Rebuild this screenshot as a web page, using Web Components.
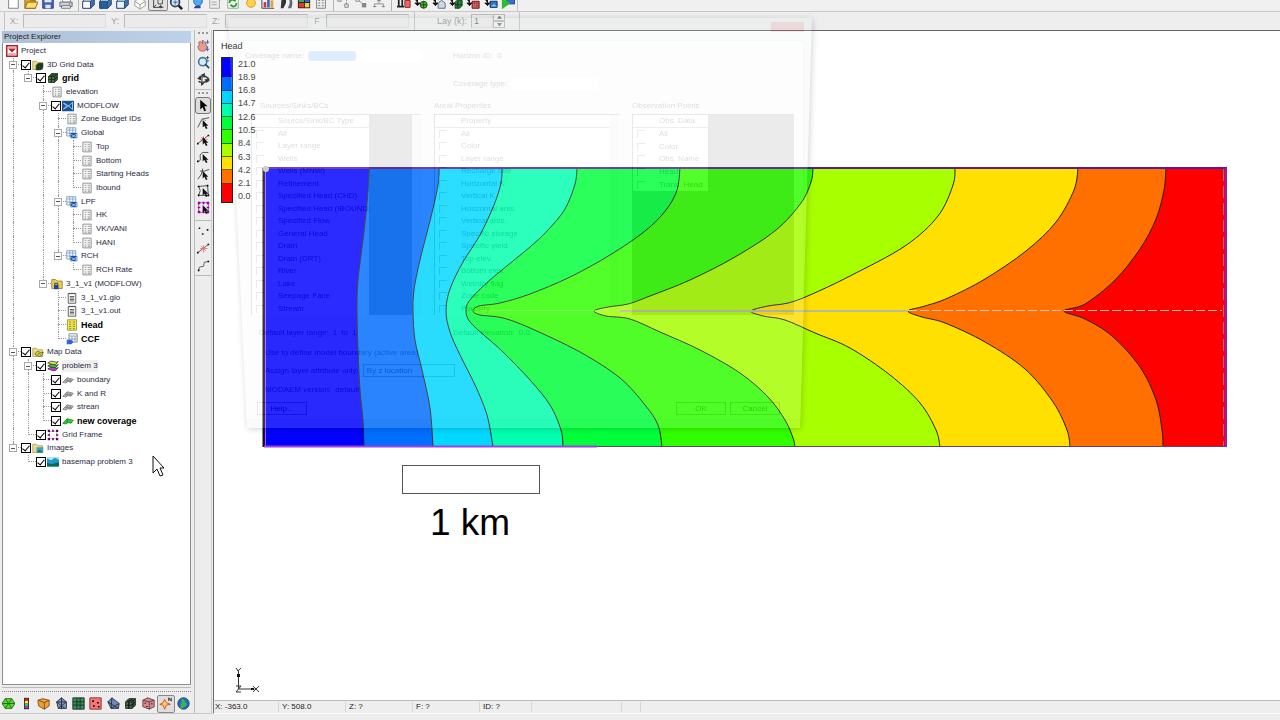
<!DOCTYPE html>
<html lang="en">
<head>
<meta charset="utf-8">
<title>Groundwater model – Head</title>
<style>
html,body{margin:0;height:100%}
body{background:#eeeded;font:8px/12px "Liberation Sans",Arial,sans-serif;color:#222;overflow:hidden}
</style>
</head>
<body>
<gw-app></gw-app>
<script>
const define = (name, css, html) => customElements.define(name, class extends HTMLElement {
  connectedCallback() {
    if (this.shadowRoot) return;
    const root = this.attachShadow({ mode: 'open' });
    root.innerHTML = `<style>*{box-sizing:border-box}${css}</style>${typeof html === 'function' ? html(this) : html}`;
  }
});

/* ---------- icons, all on a 16 x 16 grid ---------- */
const sheet = '<path d="M2.5 1.5h11v13h-11z" fill="#f4f4f4" stroke="#777"/><path d="M5 4.5h2M9 4.5h3M5 7.5h2M9 7.5h3M5 10.5h2M9 10.5h3M5 12.5h2M9 12.5h3" stroke="#888"/>';
const folder = '<path d="M1 3h5l2 2h6v9H1z" fill="#ecd98a" stroke="#a89850"/>';
const cube = (f, s) => `<path d="M2 6l4-4h8v8l-4 4H2z" fill="${f}" stroke="${s}"/><path d="M2 6h8v8M10 6l4-4M2 10h8l4-4M6 6v8l0-8 4-4M4 4h8v8" fill="none" stroke="${s}"/>`;
const cursor = '<path d="M7 5v9l2-2 2 4 2-1-2-3h3z" fill="#111"/>';
const window_ = (f) => `<path d="M2 6l4-4h9v8l-4 4H2z" fill="#bfe2f2" stroke="#456"/><path d="M2 6h9v8H2z" fill="${f}" stroke="#247"/><path d="M11 6l4-4v8l-4 4z" fill="#47a" stroke="#247"/>`;
const cross = '<path d="M1 13L14 3" stroke="#444"/><path d="M8 4v9M4 8h9M5 5l6 6" stroke="#e66"/><path d="M0 12h2v2H0zM13 2h2v2h-2z" fill="#111"/>';
const layers = '<path d="M1 12q4-4 8-2t6 0q-3 6-8 4t-6-2z" fill="#d136d1" stroke="#333"/><path d="M1 8q4-4 8-2t6 0q-3 6-8 4t-6-2z" fill="#2fc22f" stroke="#333"/><path d="M1 4q4-4 8-2t6 0q-3 6-8 4t-6-2z" fill="#dde13c" stroke="#333"/>';
const put = (g) => '<path d="M1 4h3v4M1 8h6l-3 3z" fill="#111" stroke="#111"/>' + g;
const ICONS = {
  new: '<path d="M3 1h8l3 3v10H3z" fill="#fff" stroke="#777"/>',
  open: '<path d="M1 3h5l1 2h6v9H1z" fill="#d9a93a" stroke="#85621a"/><path d="M4 7h12l-3 7H1z" fill="#ffe06d" stroke="#85621a"/>',
  save: '<path d="M2 1h12v13H2z" fill="#4862b8" stroke="#24326d"/><path d="M4 1h8v6H4zM5 10h6v4H5z" fill="#dfe6f5"/>',
  print: '<path d="M4 2h9v5H4z" fill="#fff" stroke="#888"/><path d="M1 7h14v5H1z" fill="#cfd0dc" stroke="#667"/><path d="M3 11h10v3H3z" fill="#f1f1f1" stroke="#667"/><path d="M11 9h2" stroke="#2a3"/>',
  win1: window_('#fff'), win2: window_('#24609c'), win3: window_('#e8f4fa'),
  ghost: '<path d="M2 6l6-4 6 4v5l-6 4-6-4z" fill="#fafafa" stroke="#999"/><path d="M2 6l6 4 6-4M8 10v5" fill="none" stroke="#999"/>',
  axes: '<path d="M3 2v11h11M3 13l3-3" fill="none" stroke="#333"/><path d="M8 4h5v5H8zM11 10v4M9 12h4" fill="none" stroke="#444"/>',
  zoomg: '<circle cx="7" cy="7" r="5" fill="#cfe5f6" stroke="#345" stroke-width="2"/><path d="M11 11l4 4" stroke="#222" stroke-width="3"/><path d="M5 7h5M7 5v5" stroke="#26a"/>',
  bulb: '<circle cx="8" cy="6" r="5" fill="#55a9ee" stroke="#2468b4"/><path d="M5 11h6v3H3l2-3z" fill="#2b45a8"/>',
  prop: '<path d="M2 3h11v11H2z" fill="#eee" stroke="#999"/><path d="M4 7h6M4 10h6" stroke="#999"/><path d="M10 3l4-2 1 4z" fill="#888"/>',
  refresh: '<path d="M2 1h12v13H2z" fill="#f4f4f4" stroke="#8a8"/><path d="M4 8q0-4 4-4l3 2M12 8q0 4-4 4l-3-2" fill="none" stroke="#1fa32c" stroke-width="2"/>',
  sun: '<circle cx="8" cy="8" r="5" fill="#ffd24a" stroke="#d7941a"/>',
  bars: '<path d="M1 1v13h14" fill="none" stroke="#333"/><path d="M3 7h3v6H3z" fill="#c33"/><path d="M7 3h3v10H7z" fill="#36c"/><path d="M11 5h3v8h-3z" fill="#e6a02a"/>',
  find: '<path d="M3 2h5v6l-3 6H2z" fill="#333"/><path d="M9 2q6 3 1 12h4q3-8-1-12z" fill="#666"/>',
  colors: '<path d="M1 1h14v13H1z" fill="#222"/><path d="M2 2h6v5H2z" fill="#3a6"/><path d="M9 2h5v5H9z" fill="#36d"/><path d="M2 8h6v5H2z" fill="#e33"/><path d="M9 8h5v5H9z" fill="#fc3"/>',
  calc: '<path d="M3 1h10v13H3z" fill="#eee" stroke="#777"/><path d="M5 5h2M9 5h2M5 8h2M9 8h2M5 11h2M9 11h2" stroke="#666"/>',
  flow1: '<path d="M2 2h4v4H2zM10 9h4v4h-4z" fill="#ddd" stroke="#888"/><path d="M6 4h6v5" fill="none" stroke="#888" stroke-dasharray="2 1"/>',
  flow2: '<path d="M9 8h5v5H9z" fill="#888"/><path d="M2 2h4v4H2z" fill="none" stroke="#888"/><path d="M6 6l3 2" stroke="#888"/>',
  flow3: '<path d="M6 2h4v4H6z" fill="#888"/><path d="M8 6v3M3 13V9h10v4" fill="none" stroke="#888"/><path d="M1 12h4M11 12h4" stroke="#888"/>',
  gridred: '<path d="M2 2v11M0 12h8M6 2v11" stroke="#222" stroke-width="2"/><path d="M9 5h6v8H9z" fill="#e66" stroke="#722"/>',
  tomesh: put('<circle cx="11" cy="10" r="4" fill="#4cb02f" stroke="#164a0c"/><path d="M7 10h8M11 6v8" stroke="#164a0c"/>'),
  tosolid: put('<path d="M7 8l4-3 4 3v6H7z" fill="#cdd8e6" stroke="#567"/>'),
  togrid: put('<path d="M7 7l2-2h6v6l-3 3H7z" fill="#2c7a35" stroke="#0c3a14"/><path d="M10 6v8M7 10h8" stroke="#0c3a14"/>'),
  tored: put('<path d="M7 6h8v8H7z" fill="#d65a5a" stroke="#511"/><path d="M9 8h1M12 11h1M12 8h1" stroke="#111"/>'),
  toblue: put('<path d="M7 6h8v7H7z" fill="#2a78d8" stroke="#124"/><path d="M8 12l3-3 4 3z" fill="#7cc7ff"/>'),
  run: '<path d="M6 1h10v8H6z" fill="#3a69d8" stroke="#223a80"/><path d="M1 3l10 5-10 7z" fill="#28c02c"/>',
  hand: '<path d="M2 13l-1-4 2-1-1-4 2-1 3 3-1-4h2l3 4 1 4q0 5-5 5-3 0-5-2z" fill="#e89d92" stroke="#a3544e"/><path d="M13 1v5M10 4h5M13 9v6M11 12l2 2 2-2" stroke="#2458a8" fill="none"/>',
  zoom: '<circle cx="7" cy="7" r="5" fill="#d6eaf8" stroke="#47799e" stroke-width="2"/><path d="M10 10l5 5" stroke="#2b4a6a" stroke-width="2"/><path d="M11 2h4M13 0v4M11 6h4" stroke="#245"/>',
  rotate: '<path d="M3 5q6-3 10 1t-3 5-8-1" fill="none" stroke="#444" stroke-width="2"/><path d="M9 2q-5 3-2 12" fill="none" stroke="#777" stroke-width="2"/><path d="M0 7l5-4v6zM10 0l-1 6-4-4zM15 7l-3 5-3-4zM5 16l0-5 4 2z" fill="#333"/>',
  arrow: '<path d="M4 1v12l3-3 2 5 2-1-2-5h4z" fill="#000"/>',
  vert: '<path d="M1 14L6 4l9-2" fill="none" stroke="#333"/><path d="M6 3l5 3" stroke="#888"/>' + cursor,
  arcx: cross + cursor,
  arcs: '<path d="M1 14q4 0 3-5t4-6h6" fill="none" stroke="#333"/><path d="M0 13h2v2H0z"/>' + cursor,
  arcg: '<path d="M1 15q6-6 6-13M4 5h5l6-2" fill="none" stroke="#333"/>' + cursor,
  poly: '<path d="M2 3l11-1 1 12H2l2-6z" fill="none" stroke="#333"/><path d="M1 2h2v2H1zM12 1h2v2h-2zM1 13h2v2H1zM13 13h2v2h-2z"/>' + cursor,
  frame: '<path d="M2 2h12v12H2z" fill="none" stroke="#b3b"/><path d="M1 1h3v3H1zM7 1h2v3H7zM12 1h3v3h-3zM1 7h3v2H1zM1 12h3v3H1zM12 12h3v3h-3zM12 7h3v2h-3zM7 12h2v3H7z" fill="#909"/>' + cursor,
  points: '<path d="M2 3h2v2H2zM12 5h2v2h-2zM6 10h2v2H6z" fill="#111"/>',
  cross,
  arc: '<path d="M2 14l1-4 5-1 1-5 5-1" fill="none" stroke="#444"/><path d="M1 13h2v2H1zM13 2h2v2h-2z"/>',
  project: '<path d="M1 1h14v14H1z" fill="#fff" stroke="#b3202c" stroke-width="2"/><path d="M3 5h10L8 10z" fill="#b3202c"/><path d="M3 4h10M3 12h10" stroke="#b3202c"/>',
  gfolder: folder + '<g transform="translate(4 4) scale(.75)">' + cube('#2f5c36', '#10240f') + '</g>',
  cube: cube('#47734a', '#12280f'),
  sheet,
  modflow: '<path d="M0 1h16v14H0z" fill="#195397"/><path d="M2 4l7 4 5-5v10l-5-5-7 4 4-4z" fill="none" stroke="#cfe4ff"/>',
  package: '<path d="M1 1h12v11H1z" fill="#fff" stroke="#5985b8"/><path d="M1 4h12M5 1v11M9 1v11M1 8h12" stroke="#6d96c6"/><path d="M6 8h9v7H6z" fill="#195397"/><path d="M7 10l4 2 3-3v5l-3-2-4 2" fill="none" stroke="#bfe0ff"/>',
  sol: '<path d="M1 2h5l2 2h7v10H1z" fill="#ecc94f" stroke="#8f7826"/><path d="M4 9h6v6H4z" fill="#1748a8"/><path d="M5 9V7h4v2" fill="none" stroke="#124"/>',
  text: '<path d="M3 2h10v13H3z" fill="#fff" stroke="#333"/><path d="M5 6h6M5 8h6M5 10h6M5 12h6M5 1v2M8 1v2M11 1v2" stroke="#333"/>',
  head: '<path d="M2 1h12v14H2z" fill="#f3ec4e" stroke="#8b8620"/><path d="M4 4h3M9 4h3M4 7h3M9 7h3M4 10h3M9 10h3M4 13h3M9 13h3" stroke="#6a661a"/>',
  ccf: '<path d="M4 1h11v11H4z" fill="#fff" stroke="#678"/><path d="M4 4h11M8 4v8M12 4v8M4 8h11" stroke="#789"/><path d="M1 9h6l3 3-3 3H1z" fill="#2b68cf"/>',
  mfolder: folder + '<g transform="translate(3 4) scale(.8)"><path d="M1 8q4-6 8-3t6 0q-2 9-8 7t-6-4z" fill="#e0e43a" stroke="#222"/><path d="M5 9q3-3 6 0" fill="none" stroke="#222"/></g>',
  layers,
  cov: '<path d="M1 11l6-6 4 1 4 1-3 4-4-1-3 2z" fill="#bbb" stroke="#777"/><path d="M7 5v5M11 6v4M4 9h9" stroke="#777" fill="none"/>',
  covon: '<path d="M1 11l6-6 4 1 4 1-3 4-4-1-3 2z" fill="#27d327" stroke="#137a13"/><path d="M7 5v5" stroke="#137a13"/>',
  gframe: '<path d="M3 3h10v10H3z" fill="none" stroke="#b9b" /><path d="M1 1h3v3H1zM7 1h2v3H7zM12 1h3v3h-3zM1 7h3v2H1zM1 12h3v3H1zM12 12h3v3h-3zM12 7h3v2h-3zM7 12h2v3H7z" fill="#606"/>',
  ifolder: folder + '<path d="M6 7h9v7H6z" fill="#3aa0d8"/><path d="M6 14l4-4 5 4z" fill="#1b7f3a"/>',
  image: '<path d="M0 2h16v12H0z" fill="#1f9ad0"/><path d="M0 3q6 4 8 1t8 1V2H0z" fill="#bdf0ff"/><path d="M0 14V9l6 2 10-3v6z" fill="#0b6a4c"/>',
  tin: '<path d="M4 2h8l4 6-4 6H4L0 8z" fill="#58d82f" stroke="#1b5d10"/><path d="M8 8L4 2M8 8l4-6M8 8h8M8 8l4 6M8 8l-4 6M8 8H0" stroke="#1b5d10"/>',
  bore: '<path d="M5 1h6v14H5z" fill="#222"/><path d="M6 2h4v3H6z" fill="#e22"/><path d="M6 5h4v3H6z" fill="#fe3"/><path d="M6 8h4v3H6z" fill="#2d4"/><path d="M6 11h4v3H6z" fill="#a3d"/>',
  solid: '<path d="M1 4l6-2 8 2v7l-6 4-7-4z" fill="#f0a038" stroke="#6a4410"/><path d="M2 4l7 3 6-3M9 7v8" fill="none" stroke="#6a4410"/>',
  mesh3: '<path d="M2 6l6-5 6 5v8H4z" fill="#7f98bd" stroke="#223"/><path d="M2 6h12M8 1v14M4 14l10-8M2 6l10 8" stroke="#223"/>',
  grid2: '<path d="M1 1h14v14H1z" fill="#3f8f4a" stroke="#123"/><path d="M1 6h14M1 10h14M6 1v14M10 1v14" stroke="#123"/>',
  scatter: '<path d="M1 1h14v14H1z" fill="#f37676" stroke="#822"/><path d="M4 4h2v2H4zM10 6h2v2h-2zM5 10h2v2H5zM11 11h2v2h-2z"/>',
  mesh: '<path d="M1 6l5-5 9 7-1 6H5z" fill="#6d8dbb" stroke="#223"/><path d="M1 6l13 8M6 1l-1 13M5 14l10-6" stroke="#223"/>',
  grid3: cube('#4d7355', '#111'),
  scatter3: '<path d="M1 4l6-3 8 3v8l-6 3-8-3z" fill="#d88a8f" stroke="#533"/><path d="M1 4l8 2 6-2M9 6v9" fill="none" stroke="#533"/><path d="M3 7h2v1H3zM5 11h2v1H5zM11 8h2v1h-2z"/>',
  map: '<path d="M7 3l2 4 5 2-5 1-2 5-2-5-4-1 4-2z" fill="#ffd84a" stroke="#d3372b"/><path d="M12 5V1l3 4V1" fill="none" stroke="#111"/>',
  globe: '<circle cx="8" cy="8" r="7" fill="#1f6fd0" stroke="#134"/><path d="M3 4q5-4 6 0t3 4-4 5-3-4-2-5z" fill="#3db54a"/>'
};
define('gw-icon', ':host{display:block;width:16px;height:16px;flex:none}svg{display:block;width:100%;height:100%}',
  el => `<svg viewBox="0 0 16 16" aria-hidden="true">${ICONS[el.getAttribute('name')] || ''}</svg>`);

const buttons = (names) => names.split(' ').map(n => {
  const on = n.endsWith('!'); const id = n.replace('!', '');
  return `<button type="button" aria-label="${id}" class="${on ? 'on' : ''}"><gw-icon name="${id}"></gw-icon></button>`;
}).join('');

/* ---------- top toolbar ---------- */
define('gw-toolbar', `
:host{display:flex;align-items:flex-end;height:12px;padding:0 4px;gap:3px;overflow:hidden;border-bottom:1px solid #c9c9c9;background:#f1f0f0}
div{display:flex;align-items:flex-end;height:100%}
div+div{border-left:1px solid #b5b5b5}
.a{width:71px}.b{width:107px}.c{width:142px}.d{width:55px}.e{width:127px;padding-left:3px;border-right:1px solid #c4c4c4}
button{flex:1;height:17px;padding:0;border:0;background:none;display:flex;justify-content:center;align-items:center}
.on{border:1px solid #888;border-radius:2px;background:#e2e2e2}
gw-icon{width:14px;height:14px}`,
`<div class="a">${buttons('new open save print')}</div><div class="b">${buttons('win1 win2 win3 ghost axes! zoomg')}</div>
<div class="c">${buttons('bulb prop refresh sun bars find colors calc')}</div><div class="d">${buttons('flow1 flow2 flow3')}</div>
<div class="e">${buttons('gridred tomesh tosolid togrid tored toblue run')}</div>`);

/* ---------- coordinate bar ---------- */
define('gw-coords', `
:host{display:flex;align-items:center;height:18px;padding-left:4px;background:#efeeee;color:#a2a2a2;font-size:9px}
.g,.k{display:flex;align-items:center;height:18px;border-left:1px solid #c4c4c4}
label{width:18px;text-align:center}
input{width:83px;height:14px;border:1px solid #bbb;border-right-color:#ddd;border-bottom-color:#ddd;background:#ecebeb;padding:0 4px;font:inherit;color:#777}
.k{margin-left:5px;padding-left:22px;border-right:1px solid #c4c4c4;padding-right:14px}
.k label{width:34px;text-align:left;color:#999}
.spin{display:flex}
.k input{width:22px;padding:0 2px}
.ud{width:12px;display:grid;grid-template-rows:7px 7px}
.ud button{padding:0;border:1px solid #bbb;background:#f1f1f1;display:flex;align-items:center;justify-content:center}
.ud svg{width:5px;height:3px}`,
`<div class="g">${['X:', 'Y:', 'Z:', 'F'].map((l, i) => `<label for="c${i}">${l}</label><input id="c${i}" disabled>`).join('')}</div>
<div class="k"><label for="lay">Lay (k):</label><span class="spin"><input id="lay" value="1"><span class="ud">
<button type="button" aria-label="Layer up"><svg viewBox="0 0 5 3"><path d="M0 3h5L3 0H2z" fill="#888"/></svg></button>
<button type="button" aria-label="Layer down"><svg viewBox="0 0 5 3"><path d="M0 0h5L3 3H2z" fill="#888"/></svg></button></span></span></div>`);

/* ---------- project tree: level, checkbox, icon, label, flags ---------- */
const TREE = [
  [0, 0, 'project', 'Project'], [1, 1, 'gfolder', '3D Grid Data', 'x'], [2, 1, 'cube', 'grid', 'xb'], [3, 0, 'sheet', 'elevation'],
  [3, 1, 'modflow', 'MODFLOW', 'x'], [4, 0, 'sheet', 'Zone Budget IDs'], [4, 0, 'package', 'Global', 'x'], [5, 0, 'sheet', 'Top'],
  [5, 0, 'sheet', 'Bottom'], [5, 0, 'sheet', 'Starting Heads'], [5, 0, 'sheet', 'Ibound'], [4, 0, 'package', 'LPF', 'x'],
  [5, 0, 'sheet', 'HK'], [5, 0, 'sheet', 'VK/VANI'], [5, 0, 'sheet', 'HANI'], [4, 0, 'package', 'RCH', 'x'], [5, 0, 'sheet', 'RCH Rate'],
  [3, 0, 'sol', '3_1_v1 (MODFLOW)', 'x'], [4, 0, 'text', '3_1_v1.glo'], [4, 0, 'text', '3_1_v1.out'], [4, 0, 'head', 'Head', 'b'],
  [4, 0, 'ccf', 'CCF', 'b'], [1, 1, 'mfolder', 'Map Data', 'x'], [2, 1, 'layers', 'problem 3', 'xs'], [3, 1, 'cov', 'boundary'],
  [3, 1, 'cov', 'K and R'], [3, 1, 'cov', 'strean'], [3, 1, 'covon', 'new coverage', 'b'], [2, 1, 'gframe', 'Grid Frame'],
  [1, 1, 'ifolder', 'Images', 'x'], [2, 1, 'image', 'basemap problem 3']
];
const continues = (i, level) => {
  for (let j = i + 1; j < TREE.length && TREE[j][0] >= level; j++) if (TREE[j][0] === level) return true;
  return false;
};
define('gw-tree', `
:host{display:grid;grid-auto-rows:1fr;height:425px;padding-left:3px;margin-top:1px}
.row{display:flex;align-items:center;min-height:0}
.row>i{width:15px;height:100%;flex:none;display:grid;grid-template:1fr 1fr/7px 8px}
i b{grid-area:1/2}
.v b,.t b{border-left:1px dotted #999}
.v b{grid-row:1/3}
i u{grid-area:1/2;border-bottom:1px dotted #999}
i button{grid-area:1/1/3/3;align-self:center;margin-left:3px;width:8px;height:8px;padding:0;border:1px solid #aaa;background:#fff;display:flex;align-items:center}
i button::after{content:"";flex:1;margin:0 1px;height:1px;background:#555}
input{appearance:none;width:10px;height:10px;margin:0 1px 0 0;border:1px solid #000;background:#fff;flex:none;display:flex;justify-content:center}
input:checked::before{content:"";width:3px;height:6px;border:solid #000;border-width:0 1px 1px 0;transform:rotate(40deg)}
gw-icon{width:12px;height:12px}
label,.t0{margin-left:3px;white-space:nowrap;color:#2b2b44}
.bold{font-size:9px;font-weight:700;color:#000}
.sel{background:#f0f0f0}`,
TREE.map(([lv, cb, ic, tx, fl = ''], i) => {
  let cells = '';
  for (let k = 1; k <= lv; k++) {
    const own = k === lv, more = continues(i, k);
    cells += `<i class="${more ? 'v' : own ? 't' : ''}">${own || more ? '<b></b>' : ''}${own ? '<u></u>' : ''}${own && fl.includes('x') ? `<button type="button" aria-label="Collapse ${tx}"></button>` : ''}</i>`;
  }
  const cls = `${fl.includes('b') ? 'bold' : ''} ${fl.includes('s') ? 'sel' : ''}`;
  return `<div class="row">${cells}${cb ? `<input type="checkbox" id="n${i}" checked>` : ''}<gw-icon name="${ic}"></gw-icon>${cb ? `<label for="n${i}" class="${cls}">${tx}</label>` : `<span class="t0 ${cls}">${tx}</span>`}</div>`;
}).join(''));

define('gw-explorer', `
:host{display:flex;flex-direction:column;min-height:0;padding:1px 3px 0 2px}
h2{margin:0;height:12px;font:inherit;padding-left:2px;background:linear-gradient(90deg,#aebfd6,#bdd2ea);color:#222}
.box{flex:1;min-height:0;overflow:hidden;background:#fff;border:1px solid #8e8e8e;border-width:0 1px 1px;margin-bottom:2px}
nav{display:flex;border-top:1px solid #bbb;height:26px;padding-top:2px;flex-direction:column}
.dots{border-top:1px dotted #888;height:4px;margin-top:1px}
.bar{display:flex;margin-left:-2px;margin-right:-1px;height:19px}
.bar button{flex:1;padding:0;border:1px solid transparent;background:none;display:flex;align-items:center;justify-content:center}
.bar .on{border-color:#888;border-radius:2px;background:#dedede}
gw-icon{width:13px;height:13px}`,
`<h2>Project Explorer</h2><div class="box"><gw-tree></gw-tree></div>
<nav aria-label="Modules"><div class="dots"></div><div class="bar">${buttons('tin bore solid mesh3 grid2 scatter mesh grid3 scatter3 map! globe')}</div></nav>`);

/* ---------- vertical tool palette ---------- */
define('gw-palette', `
:host{display:block;border-left:1px solid #bbb;border-right:1px solid #ccc;padding-top:2px}
div{display:grid;padding:0 0 1px;border-bottom:1px solid #bbb}
div.d::before{content:"";border-top:2px dotted #999;height:3px;margin:0 3px}
div.m{padding:2px 0 4px}
button{height:17px;padding:0;border:1px solid transparent;background:none;display:flex;align-items:center;justify-content:center}
.on{border-color:#777;border-radius:3px;background:#dcdcdc}
.m+div{padding-top:2px}
gw-icon{width:13px;height:13px}`,
`<div class="d">${buttons('hand zoom rotate')}</div><div class="d m">${buttons('arrow! vert arcx arcs arcg poly frame')}</div><div>${buttons('points cross arc')}</div>`);

/* ---------- head contours ---------- */
const BANDS = ['#0000ff', '#006eff', '#00d8ff', '#00ffae', '#00ff3a', '#30ff00', '#a8ff00', '#ffe000', '#ff7000', '#ff0000'];
const CONTOURS = [
  [369,168, 368,190, 366,213, 363,240, 358,280, 357,311, 358,350, 360,390, 363,420, 364,447],
  [439,168, 438,185, 431,217, 420,260, 414,290, 413,312, 415,340, 422,370, 430,408, 433,447],
  [502,168, 501,183, 494,205, 480,235, 463,262, 450,289, 446,311, 450,332, 460,355, 475,385, 487,415, 493,447],
  [577,168, 575,184, 565,209, 548,230, 530,247, 490,280, 470,300, 466,311, 470,322, 485,336, 503,352, 530,380, 550,405, 561,430, 563,447],
  [680,168, 677,190, 666,210, 645,231, 610,255, 570,277, 530,294, 500,303, 479,306, 473,311, 480,315, 503,318, 530,328, 580,352, 620,378, 645,405, 658,425, 662,447],
  [813,168, 811,182, 801,203, 776,230, 735,257, 690,280, 650,296, 628,304, 608,307, 594,311, 606,316, 630,319, 660,332, 700,350, 740,373, 768,397, 785,420, 793,438, 795,447],
  [955,168, 953,185, 938,216, 905,246, 850,276, 810,295, 788,303, 768,306, 751,311, 763,316, 785,320, 815,333, 850,348, 890,375, 920,403, 936,430, 940,447],
  [1078,168, 1074,190, 1056,222, 1026,251, 985,279, 948,298, 925,306, 908,311, 922,317, 945,323, 985,342, 1025,369, 1053,402, 1067,430, 1070,447],
  [1166,168, 1164,190, 1156,219, 1140,249, 1115,280, 1085,304, 1064,311, 1085,319, 1112,336, 1140,367, 1156,400, 1162,430, 1163,447]
];
const spline = (p) => {
  const at = (i) => { i = Math.max(0, Math.min(p.length / 2 - 1, i)); return [p[2 * i], p[2 * i + 1]]; };
  let d = `M${p[0]} ${p[1]}`;
  for (let i = 0; i < p.length / 2 - 1; i++) {
    const [a, b, c, e] = [at(i - 1), at(i), at(i + 1), at(i + 2)];
    d += `C${b[0] + (c[0] - a[0]) / 6} ${b[1] + (c[1] - a[1]) / 6} ${c[0] - (e[0] - b[0]) / 6} ${c[1] - (e[1] - b[1]) / 6} ${c[0]} ${c[1]}`;
  }
  return d;
};
define('gw-map', `
:host{display:block;position:relative;background:#fff;border:1px solid #666;border-width:1px 0 0 1px;min-height:0;overflow:hidden}
svg{display:block;width:100%;height:100%}
text{font-family:"Liberation Sans",Arial,sans-serif;fill:#000}
.legend{position:absolute;left:7px;top:9px;font-size:9px;color:#222}
.legend>div{display:flex;gap:5px;height:146px;margin-top:5px}
.bar{width:12px;display:flex;flex-direction:column;border:1px solid #222}
.bar i{flex:2;border-bottom:1px solid rgba(0,0,0,.55)}
.bar i:first-child,.bar i:last-child{flex:3}.bar i:last-child{border:0}
ol{margin:0;padding:0;list-style:none;display:grid;grid-auto-rows:1fr;align-items:center}`,
`<svg viewBox="214 31 1066 669" preserveAspectRatio="xMinYMin meet" role="img" aria-label="Head contours">
<path d="M264 168H1227V447H264z" fill="${BANDS[0]}"/>
${CONTOURS.map((c, i) => `<path d="${spline(c)}H1225V168z" fill="${BANDS[i + 1]}"/>`).join('')}
${CONTOURS.map(c => `<path d="${spline(c)}" fill="none" stroke="#222" stroke-width="1"/>`).join('')}
<path d="M480 310.5H620" stroke="#8f8" opacity=".5"/><path d="M620 311H908" stroke="#b9b9a8" stroke-width="2"/><path d="M908 310.5H1222" stroke="#e0c8b8" stroke-dasharray="9 3"/>
<path d="M263.5 168V447" stroke="#111" stroke-width="2"/><path d="M265.5 169V446" stroke="#b45cf0"/>
<path d="M264 168H1227" stroke="#5c1a96" stroke-width="2"/>
<path d="M264 446.5H597" stroke="#a040e0" stroke-width="2"/><path d="M597 446.5H1227" stroke="#6b3a7c"/>
<path d="M1223.5 169V446" stroke="#a06c80" stroke-dasharray="12 5"/><path d="M1226 168V447" stroke="#8a1dce" stroke-width="2"/>
<circle cx="266" cy="169" r="3" fill="#c9c2c2"/>
<rect x="402.5" y="465.5" width="137" height="28" fill="#fff" stroke="#555"/>
<text x="430" y="535" font-size="37">1 km</text>
<g stroke="#333" fill="none"><path d="M238.5 675v14h16"/><path d="M236 668l2 3 3-3M238.5 671v3M253 686l6 6M259 686l-6 6M236 686h5l-5 6h5"/></g><path d="M237 674h3v3h-3zM251 688h3v2h-3z" fill="#111"/>
</svg>
<div class="legend">Head<div><span class="bar">${BANDS.map(c => `<i style="background:${c}"></i>`).join('')}</span>
<ol>${[21.0, 18.9, 16.8, 14.7, 12.6, 10.5, 8.4, 6.3, 4.2, 2.1, 0].map(v => `<li>${v.toFixed(1)}</li>`).join('')}</ol></div></div>`);

define('gw-status', `
:host{display:flex;align-items:center;height:14px;background:#efeeee;border-bottom:1px solid #fbfbfb;border-top:1px solid #bbb;border-left:1px solid #777;padding-left:1px;color:#222}
span{width:67px;height:10px;line-height:12px;display:flex;align-items:center;border-right:1px solid #d6d6d6}
span:first-of-type{width:64px}
span+span{padding-left:3px}
span.i{width:52px}span.w{width:90px}span.n{width:19px}`,
`<span>X: -363.0</span><span>Y: 508.0</span><span>Z: ?</span><span>F: ?</span><span class="i">ID: ?</span><span class="w"></span><span class="n"></span>`);

/* ---------- coverage dialog while it fades out ---------- */
const list = (head, rows) => `<ul><li>${head}</li>${rows.map(r => `<li><label><input type="checkbox">${r}</label></li>`).join('')}</ul>`;
define('gw-dialog', `
:host{position:absolute;left:228px;top:18px;width:584px;height:410px;opacity:.17;pointer-events:none;filter:drop-shadow(1px 1px 3px #000)}
form{margin:0;height:100%;padding:4px 8px 8px;clip-path:polygon(0 0,100% 0,572px 100%,19px 100%);background:#e2e4e8;color:#333;display:flex;flex-direction:column}
header{height:18px;display:flex;justify-content:flex-end}
header button{width:33px;height:10px;border:0;background:#d86a6a;padding:0}
.c{flex:1;background:#f3f3f3;padding:8px 11px 0 14px;display:grid;grid-template-columns:170px 185px 162px;grid-template-rows:14px 27px 24px 201px 24px 20px 18px 19px 19px;column-gap:13px;border:1px solid #ccc}
.r{display:flex;align-items:center;gap:4px;white-space:nowrap}
.e{align-items:flex-end}
.c2{grid-column:2;padding-left:19px}
.all{grid-column:1/4;padding-left:14px}
.d{padding-left:8px}
.n{margin-left:-6px;gap:0}
.n label{width:61px}
.r input[type=text]{height:12px;border:0;background:#fff;font:inherit;padding:0;min-width:0}
mark{background:#3a93f5;height:10px;width:48px;border-radius:3px}
.inp{display:flex;align-items:center;background:#fff;flex:1;height:12px;padding-left:2px}
.r .ct{width:86px}
h3{font:inherit;margin:0;align-self:end;padding-bottom:2px}
h3:first-of-type{padding-left:9px}
.l{display:flex;background:#888;border-top:1px solid #777}
.l ul{margin:0;padding:0;list-style:none;display:grid;grid-template-rows:repeat(16,1fr);background:#fff;border-left:1px solid #777}
.l li{display:flex;align-items:center;min-height:0;height:100%;white-space:nowrap}
.l li:first-child{padding-left:26px;border-bottom:1px solid #999}
.l label{display:flex;align-items:center}
.l input{appearance:none;width:8px;height:8px;border:1px solid #888;border-width:1px 0 0 1px;margin:0 14px 0 4px}
.l::after{content:"";width:9px;background:#e6e6e6;margin-left:auto}
.l1 ul{width:118px}.l2 ul{width:176px}.l3 ul{width:76px;grid-template-rows:repeat(6,1fr);height:76px}.l3::after{width:0}
.r select{appearance:none;width:92px;height:13px;font:inherit;line-height:11px;border:1px solid #777;background:#f3f3f3;padding:0 3px;margin-right:auto}
.r button{width:50px;height:13px;border:1px solid #777;background:#eee;font:inherit;line-height:11px;padding:0}
.all.b{padding:0 14px 0 6px}
.r .help{margin-right:auto}`,
`<form><header><button type="button" aria-label="Close"></button></header><div class="c">
<div class="r n"><label>Coverage name:</label><span class="inp"><mark></mark></span></div><div class="r c2"><label>Horizon ID:</label><span>0</span></div><span></span>
<div class="r c2 e"><label for="ct">Coverage type:</label><input id="ct" type="text" class="ct"></div><span></span>
<h3>Sources/Sinks/BCs</h3><h3>Areal Properties</h3><h3>Observation Points</h3>
<div class="l l1">${list('Source/Sink/BC Type', ['All', 'Layer range', 'Wells', 'Wells (MNW)', 'Refinement', 'Specified Head (CHD)', 'Specified Head (IBOUND)', 'Specified Flow', 'General Head', 'Drain', 'Drain (DRT)', 'River', 'Lake', 'Seepage Face', 'Stream'])}</div>
<div class="l l2">${list('Property', ['All', 'Color', 'Layer range', 'Recharge rate', 'Horizontal K', 'Vertical K', 'Horizontal anis.', 'Vertical anis.', 'Specific storage', 'Specific yield', 'Top elev.', 'Bottom elev.', 'Wet/dry flag', 'Zone code', 'Porosity'])}</div>
<div class="l l3">${list('Obs. Data', ['All', 'Color', 'Obs. Name', 'Head', 'Trans. Head'])}</div>
<div class="r e d"><label>Default layer range:</label><span>1</span><span>to</span><span>1</span></div><div class="r e c2"><label>Default elevation:</label><span>0.0</span></div><span></span>
<div class="r e all"><label>Use to define model boundary (active area)</label></div>
<div class="r e all"><label for="sel">Assign layer attribute only:</label><select id="sel"><option>By z location</option></select></div>
<div class="r e all"><label>MODAEM version:</label><span>default</span></div>
<div class="r e all b"><button type="button" class="help">Help...</button><button type="button">OK</button><button type="button">Cancel</button></div>
</div></form>`);

define('gw-pointer', ':host{position:absolute;left:151px;top:455px;width:14px;height:23px;pointer-events:none}svg{display:block}',
  '<svg width="14" height="23" viewBox="0 0 14 23"><path d="M2 1v17l4-4 3 7 3-1-3-7h4z" fill="#fff" stroke="#111"/></svg>');

define('gw-app', `
:host{display:flex;flex-direction:column;height:100vh;position:relative;overflow:hidden}
main{flex:1;min-height:0;display:grid;grid-template-columns:194px 18px 1fr;grid-template-rows:minmax(0,1fr) 14px;padding-bottom:6px}
gw-explorer,gw-palette{grid-row:1/3;border-bottom:1px solid #c8c8c8}
gw-map,gw-status{grid-column:3;margin-left:1px}`,
`<gw-toolbar></gw-toolbar><gw-coords></gw-coords>
<main><gw-explorer></gw-explorer><gw-palette></gw-palette><gw-map></gw-map><gw-status></gw-status></main>
<gw-dialog></gw-dialog><gw-pointer></gw-pointer>`);
</script>
</body>
</html>
